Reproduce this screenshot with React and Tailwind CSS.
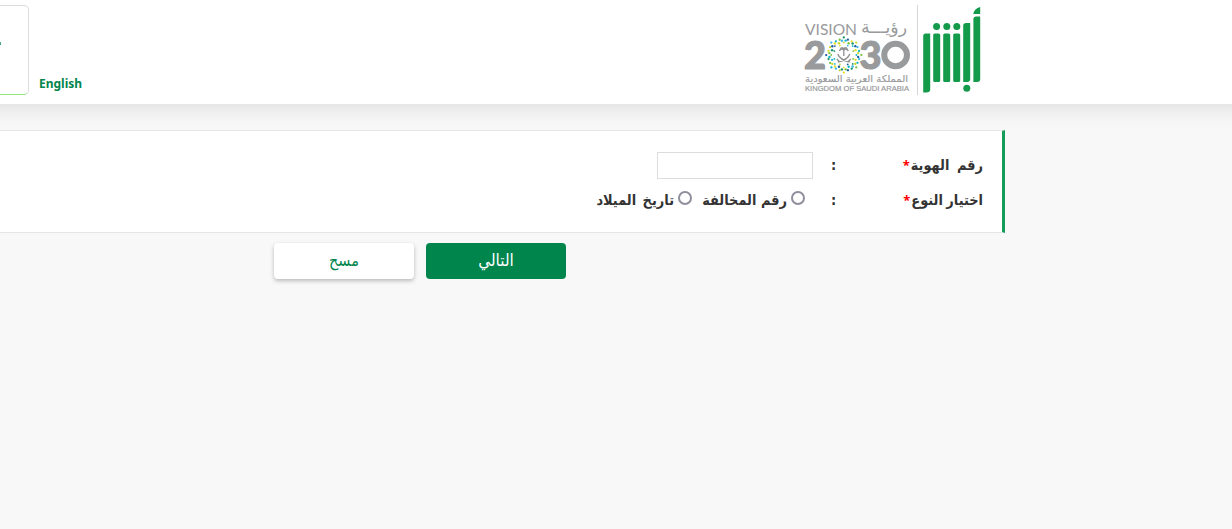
import React from "react";

const DOT_COLORS = ["#0db3c9", "#c8d82b", "#1f5f9e", "#7fc241", "#35b8e8", "#e4e02a", "#14936b"];

function Emblem() {
  const dots = [];
  [[11.4, 16, 0.9], [13.9, 24, 1.2], [16.4, 24, 1.15]].forEach(([r, n, s], ring) => {
    for (let i = 0; i < n; i++) {
      const a = (i / n) * Math.PI * 2 + ring * 0.13;
      const rr = r + Math.cos(a * 8) * 1.2;
      dots.push(
        <circle key={ring + "-" + i} cx={Math.cos(a) * rr} cy={Math.sin(a) * rr} r={s} fill={DOT_COLORS[(i * 3 + ring * 2) % 7]} />
      );
    }
  });
  return (
    <g transform="translate(43.8 50)">
      {dots}
      <g stroke="#8f9092" fill="none" strokeWidth="1.3">
        <path d="M0 1V-6M0 -5Q-3 -7 -4.5 -4M0 -5Q3 -7 4.5 -4M0 -6Q-2 -8.5 -3.5 -6M0 -6Q2 -8.5 3.5 -6" />
        <path d="M-6 7Q4 5 6 -1M6 7Q-4 5 -6 -1M-7 4L-4 7M7 4L4 7" />
      </g>
    </g>
  );
}

function VisionLogo() {
  return (
    <svg width="112" height="90" viewBox="0 0 112 90" direction="ltr" fill="#999a9c">
      <text x="5" y="29.5" fontFamily="Lato, sans-serif" fontSize="16" textLength="52" lengthAdjust="spacingAndGlyphs">VISION</text>
      <text x="61" y="28" fontFamily="'DejaVu Sans', sans-serif" fontSize="17" textLength="46" lengthAdjust="spacingAndGlyphs">رؤيـــة</text>
      <g fontFamily="Lato, sans-serif" fontWeight="900" fontSize="38" stroke="#999a9c" strokeWidth="1.2">
        <text x="4" y="63.5" textLength="22" lengthAdjust="spacingAndGlyphs">2</text>
        <text x="59.5" y="63.5" textLength="22" lengthAdjust="spacingAndGlyphs">3</text>
      </g>
      <ellipse cx="95.6" cy="50" rx="11.4" ry="11.3" fill="none" stroke="#999a9c" strokeWidth="6" />
      <Emblem />
      <text x="5" y="76.5" fontFamily="'DejaVu Sans', sans-serif" fontSize="9.5" stroke="#999a9c" strokeWidth=".15" textLength="103" lengthAdjust="spacingAndGlyphs">المملكة العربية السعودية</text>
      <text x="5" y="85.5" fontFamily="'Liberation Sans', sans-serif" fontSize="7.8" stroke="#999a9c" strokeWidth=".2" textLength="104" lengthAdjust="spacingAndGlyphs">KINGDOM OF SAUDI ARABIA</text>
    </svg>
  );
}

function AbsherLogo() {
  return (
    <svg width="62" height="90" viewBox="0.8 0 62 90" fill="#139a4b">
      <path d="M5 31Q5 28.5 7.5 28.5H12V84.5Q12 87.5 8 87.5H5Z" />
      <rect x="15" y="28.5" width="7" height="48.5" rx="1.5" />
      <rect x="25" y="28.5" width="7" height="48.5" rx="1.5" />
      <rect x="35" y="28.5" width="7" height="48.5" rx="1.5" />
      <path d="M45 20.5Q45 18 48 18H52V74Q52 77 49 77H45Z" />
      <path d="M55.2 14Q55.2 11.5 58 11.5H62V74Q62 77 59 77H55.2Z" />
      <path d="M55.2 9Q56 3.5 62 2V9Z" />
      <circle cx="18.4" cy="21.5" r="3.5" />
      <circle cx="28.6" cy="21.5" r="3.5" />
      <circle cx="38.6" cy="21.5" r="3.5" />
      <circle cx="48.6" cy="83.3" r="3.5" />
    </svg>
  );
}

function Radio({ label, className }) {
  return (
    <label className={"flex items-center " + className}>
      <input type="radio" name="kind" className="m-0 mb-[5px] size-3.5 shrink-0 appearance-none rounded-full border-2 border-[#8f8f9d] bg-white" />
      <span className="ms-1 whitespace-nowrap">{label}</span>
    </label>
  );
}

function Label({ children, className }) {
  return (
    <div className="flex w-[152px] justify-between whitespace-nowrap">
      <span><span className={className}>{children}</span><span className="ms-px font-['Noto_Sans'] text-[13px] font-bold text-[#ff0000]">*</span></span>
      <span>:</span>
    </div>
  );
}

export default function App() {
  return (
    <div dir="rtl" className="flex h-[529px] w-full flex-col overflow-hidden bg-[#f8f8f8] text-[#333]" style={{ fontFamily: "'DejaVu Sans Condensed', 'DejaVu Sans', sans-serif" }}>
      <header className="-mx-10 flex h-[104px] shrink-0 items-start bg-white pl-10 pr-[291px] pt-[5px] shadow-[0_2px_24px_rgba(0,0,0,0.12)]">
        <AbsherLogo />
        <div className="mr-px h-[90px] w-px bg-[#d5d5d5]" />
        <div className="mr-[5px]"><VisionLogo /></div>
        <a dir="ltr" className="mr-auto ml-[10px] mt-[70px] w-[43px] whitespace-nowrap text-[12px] leading-[18px] font-bold text-[#00854d]" style={{ fontFamily: "'Noto Sans', sans-serif" }}>English</a>
        <div className="flex h-[90px] w-[29px] items-center rounded-r-[5px] border border-l-0 border-[#ddd] border-b-[#8fe87c]">
          <span className="mr-auto mb-[14px] h-[3px] w-px bg-[#4aa780]" />
        </div>
      </header>
      <main className="mt-[26px] mr-[227px]">
        <section className="h-[103px] border-y border-r-[3px] border-y-[#e5e5e5] border-r-[#149c59] bg-white pr-[19px] pt-[21px] text-[14.4px] font-bold">
          <div className="flex h-[27px] items-center">
            <Label className="[word-spacing:3px]">رقم الهوية</Label>
            <input className="mr-[18px] h-[27px] w-[156px] border border-[#ddd] bg-white" />
          </div>
          <div className="mt-[8px] flex h-[27px] items-center">
            <Label className="[word-spacing:-1px]">اختيار النوع</Label>
            <Radio className="mr-[26px] w-[102px]" label="رقم المخالفة" />
            <Radio className="mr-[11px] [word-spacing:2px]" label="تاريخ الميلاد" />
          </div>
        </section>
        <div className="mt-[10px] flex gap-3 pr-[439px] text-[16px]">
          <button className="h-9 w-[140px] rounded-[4px] bg-[#00854d] text-[17px] text-white">التالي</button>
          <button className="h-9 w-[140px] rounded-[4px] bg-white text-[#00854d] shadow-[0_2px_4px_rgba(0,0,0,0.25)]">مسح</button>
        </div>
      </main>
    </div>
  );
}
